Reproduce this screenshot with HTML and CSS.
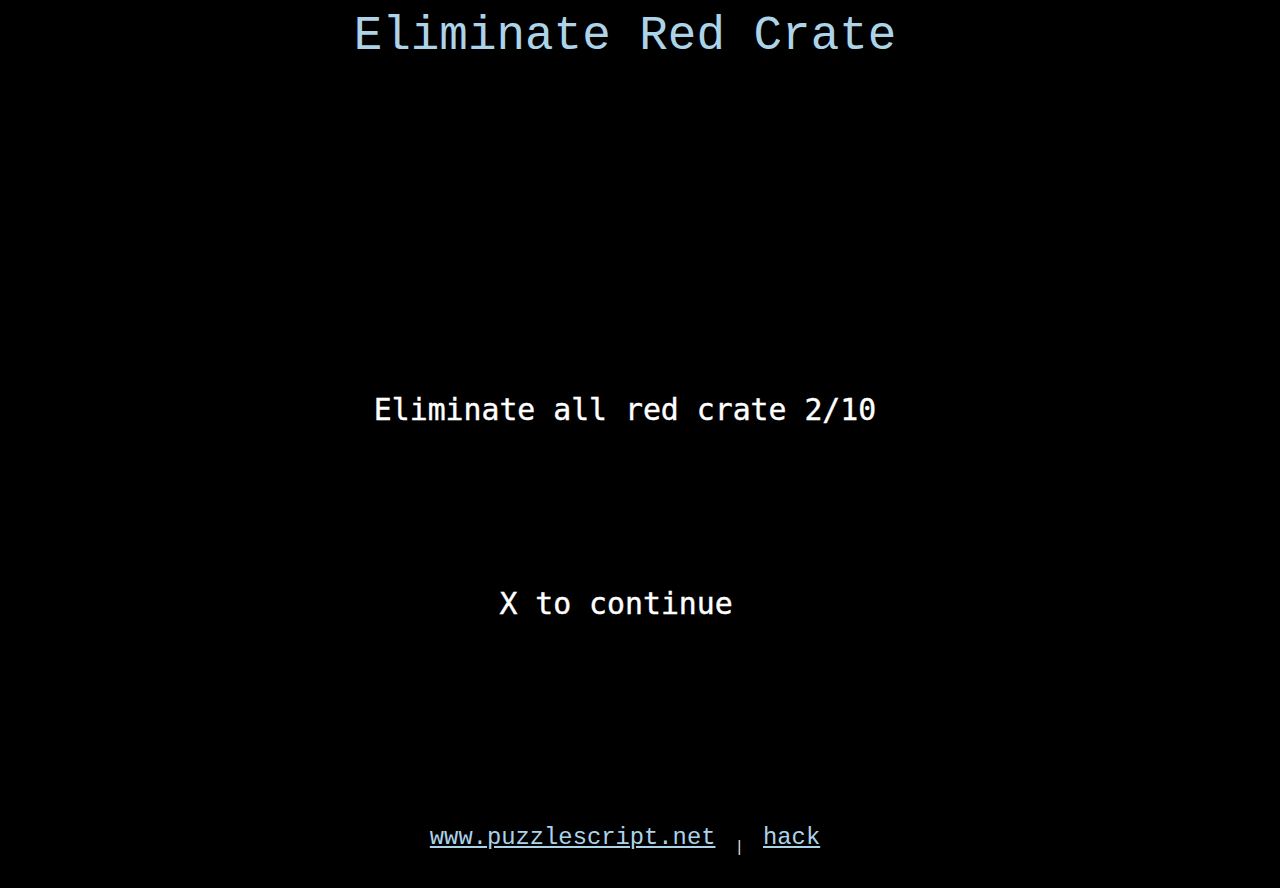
FILE: index.html
```html
<!DOCTYPE html>
<html>
<head>
<meta charset="utf-8">
<link rel="stylesheet" href="styles.css">
</head>
<body>
<div class="page">
  <h1 class="title">Eliminate Red Crate</h1>
  <div class="game">
    <div class="msg msg-main">Eliminate all red crate 2/10</div>
    <div class="msg msg-cont">X to continue </div>
  </div>
  <div class="footer">
    <a class="link" href="#">www.puzzlescript.net</a>
    <span class="sep">|</span>
    <a class="link" href="#">hack</a>
  </div>
</div>
</body>
</html>
```

FILE: styles.css
```css
html, body {
  margin: 0;
  padding: 0;
  background: #000;
  height: 100%;
}
.page {
  display: flex;
  flex-direction: column;
  align-items: center;
  height: 888px;
  width: 1250px;
}
.title {
  margin: 0;
  padding-top: 8px;
  font-family: "Courier New", "Nimbus Mono PS", "Nimbus Mono L", "FreeMono", "Liberation Mono", monospace;
  font-weight: normal;
  font-size: 47.6px;
  line-height: 56px;
  color: #add3e8;
}
.game {
  flex: 1;
  display: flex;
  flex-direction: column;
  align-items: center;
  padding-top: 328px;
}
.msg {
  font-family: "DejaVu Sans Mono", monospace;
  font-size: 29.8px;
  line-height: 36px;
  color: #fff;
  white-space: pre;
  -webkit-text-stroke: 0.4px #fff;
}
.msg-cont {
  margin-top: 158px;
}
.footer {
  display: flex;
  align-items: baseline;
  gap: 19px;
  padding-bottom: 37px;
  font-family: "Courier New", "Nimbus Mono PS", "Nimbus Mono L", "FreeMono", "Liberation Mono", monospace;
}
.link {
  font-size: 23.8px;
  color: #add3e8;
  text-decoration: underline;
}
.sep {
  font-size: 16px;
  color: #ddd;
  position: relative;
  top: 8px;
}
```
